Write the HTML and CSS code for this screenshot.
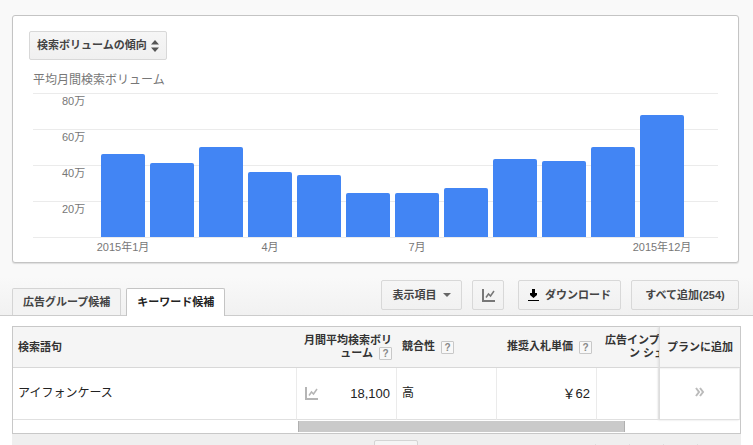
FILE: index.html
```html
<!DOCTYPE html>
<html lang="ja">
<head>
<meta charset="utf-8">
<title>キーワード候補</title>
<link rel="stylesheet" href="styles.css">
</head>
<body>
<header class="top">
  <section class="card">
    <div class="picker">
      <select class="picker-select" aria-label="グラフの種類">
        <option>検索ボリュームの傾向</option>
      </select>
      <svg class="picker-arrows" width="8" height="12" viewBox="0 0 8 12" aria-hidden="true"><path d="M4 0l4 4.500H0zM0 7.500h8L4 12z" fill="#555"/></svg>
    </div>
    <h2 class="chart-title">平均月間検索ボリューム</h2>
    <div class="chart">
      <div class="grid">
        <div class="band">80万</div>
        <div class="band">60万</div>
        <div class="band">40万</div>
        <div class="band">20万</div>
      </div>
      <div class="bars">
        <div class="bar" style="--v:461"></div>
        <div class="bar" style="--v:411"></div>
        <div class="bar" style="--v:500"></div>
        <div class="bar" style="--v:361"></div>
        <div class="bar" style="--v:344"></div>
        <div class="bar" style="--v:244"></div>
        <div class="bar" style="--v:244"></div>
        <div class="bar" style="--v:272"></div>
        <div class="bar" style="--v:433"></div>
        <div class="bar" style="--v:422"></div>
        <div class="bar" style="--v:500"></div>
        <div class="bar" style="--v:678"></div>
      </div>
    </div>
    <div class="months">
      <span>2015年1月</span><span></span><span></span>
      <span>4月</span><span></span><span></span>
      <span>7月</span><span></span><span></span>
      <span></span><span></span><span>2015年12月</span>
    </div>
  </section>

  <div class="toolbar">
    <nav class="tabs">
      <a class="tab" href="#groups">広告グループ候補</a>
      <a class="tab tab-active" href="#keywords">キーワード候補</a>
    </nav>
    <div class="actions">
      <button class="btn btn-columns" type="button">表示項目
        <svg width="8" height="4" viewBox="0 0 8 4" aria-hidden="true"><path d="M0 0h8L4 4z" fill="#666"/></svg>
      </button>
      <button class="btn btn-chart" type="button" aria-label="グラフ">
        <svg width="13" height="13" viewBox="0 0 13 13" aria-hidden="true"><path d="M1 0v12h12" fill="none" stroke="#777" stroke-width="2"/><path d="M4 8.500L6.500 5l2 2L12 2" fill="none" stroke="#777" stroke-width="1.500"/></svg>
      </button>
      <button class="btn btn-download" type="button">
        <svg width="11" height="12" viewBox="0 0 11 12" aria-hidden="true"><path d="M4 0h3v4h2v2L5.500 9 2 6V4h2zM0 11h11v1H0z" fill="#000"/></svg>
        ダウンロード
      </button>
      <button class="btn btn-all" type="button">すべて追加(254)</button>
    </div>
  </div>
</header>

<main class="results">
  <div class="table-box">
    <table class="table">
      <colgroup>
        <col><col class="col"><col class="col"><col class="col"><col class="col-cut"><col class="col-pin">
      </colgroup>
      <thead>
        <tr>
          <th scope="col">検索語句</th>
          <th scope="col" class="num">月間平均検索ボリ<br>ューム <button class="help" type="button">?</button></th>
          <th scope="col">競合性 <button class="help" type="button">?</button></th>
          <th scope="col" class="num">推奨入札単価 <button class="help" type="button">?</button></th>
          <th scope="col" class="cut"><div class="cut-label">広告インプレ<br><span class="cut-second">ン シェ</span></div></th>
          <th scope="col" class="pin">プランに追加</th>
        </tr>
      </thead>
      <tbody>
        <tr>
          <td>アイフォンケース</td>
          <td>
            <div class="volume">
              <svg width="13" height="13" viewBox="0 0 13 13" aria-hidden="true"><path d="M1 0v12h12" fill="none" stroke="#b5b5b5" stroke-width="2"/><path d="M4 8.500L6.500 5l2 2L12 2" fill="none" stroke="#b5b5b5" stroke-width="1.500"/></svg>
              <span class="figure">18,100</span>
            </div>
          </td>
          <td>高</td>
          <td class="num"><span class="figure">￥62</span></td>
          <td></td>
          <td class="pin"><button class="add" type="button" aria-label="プランに追加"><svg width="10" height="10" viewBox="0 0 10 10" aria-hidden="true"><path d="M1 1l3 4-3 4M5 1l3 4-3 4" fill="none" stroke="#bbb" stroke-width="2"/></svg></button></td>
        </tr>
      </tbody>
    </table>
    <div class="scroll"><div class="thumb"></div></div>
  </div>
  <footer class="pager">
    <button class="pager-btn" type="button" aria-label="表示行数"></button>
    <div class="pager-steps"><i></i><i></i><i></i><i></i></div>
  </footer>
</main>
</body>
</html>
```
FILE: styles.css
```css
* {
  box-sizing: border-box;
}

body {
  display: flex;
  flex-direction: column;
  height: 100vh;
  margin: 0;
  overflow: hidden;
  background: #fff;
  color: #222;
  font-family: "Liberation Sans", "Noto Sans CJK JP", sans-serif;
  font-size: 11px;
  line-height: 13px;
}

button,
select {
  margin: 0;
  font: inherit;
  color: inherit;
}

.top {
  padding: 15px 14px 0 12px;
  border-bottom: 1px solid #ccc;
  background: linear-gradient(#f9f9f9 0, #f9f9f9 88%, #f1f1f1 100%);
}

.card {
  height: 248px;
  padding: 15px 20px 0;
  border: 1px solid #c4c4c4;
  border-radius: 3px;
  background: #fff;
  box-shadow: 0 1px 1px #ddd;
}

.picker {
  position: relative;
  width: 138px;
  margin-left: -4px;
}

.picker-select {
  display: block;
  width: 100%;
  height: 29px;
  padding: 0 16px 0 7px;
  border: 1px solid #d8d8d8;
  border-radius: 2px;
  background: linear-gradient(#f6f6f6, #f0f0f0);
  color: #444;
  font-weight: bold;
  appearance: none;
}

.picker-arrows {
  position: absolute;
  top: 9px;
  right: 8px;
  pointer-events: none;
}

.chart-title {
  margin: 12px 0 5px;
  color: #777;
  font-size: 12px;
  font-weight: normal;
  line-height: 16px;
}

.chart {
  display: grid;
  height: 145px;
  border-bottom: 1px solid #ebebeb;
}

.grid,
.bars {
  grid-area: 1 / 1;
}

.grid {
  display: grid;
  grid-template-rows: repeat(4, 1fr);
}

.band {
  padding: 1px 0 0 29px;
  border-top: 1px solid #ebebeb;
  color: #777;
}

.bars,
.months {
  display: grid;
  grid-template-columns: repeat(12, minmax(0, 1fr));
  gap: 5px;
  padding: 0 34px 0 68px;
}

.bars {
  align-items: end;
}

.bar {
  height: calc(var(--v) / 800 * 100%);
  border-radius: 2px 2px 0 0;
  background: #4285f4;
}

.months {
  margin-top: 3px;
  color: #777;
}

.months span {
  display: flex;
  justify-content: center;
  white-space: nowrap;
}

.toolbar {
  display: flex;
  justify-content: space-between;
  align-items: flex-end;
  margin-top: 17px;
}

.tabs {
  display: flex;
  gap: 5px;
}

.tab {
  height: 27px;
  padding: 7px 10px 0;
  border: 1px solid #d4d4d4;
  border-bottom: 0;
  border-radius: 2px 2px 0 0;
  background: #f3f3f3;
  color: #444;
  font-weight: bold;
  text-decoration: none;
}

.tab-active {
  height: 28px;
  margin-bottom: -1px;
  border-color: #c4c4c4;
  background: #fff;
  color: #222;
}

.actions {
  display: flex;
  padding-bottom: 5px;
}

.btn {
  display: flex;
  align-items: center;
  justify-content: center;
  gap: 6px;
  height: 30px;
  padding: 0;
  border: 1px solid #d8d8d8;
  border-radius: 2px;
  background: linear-gradient(#f6f6f6, #f1f1f1);
  color: #444;
  font-weight: bold;
  white-space: nowrap;
}

.btn-columns {
  width: 81px;
}

.btn-chart {
  width: 32px;
  margin-left: 10px;
}

.btn-download {
  width: 103px;
  margin-left: 14px;
}

.btn-all {
  width: 108px;
  margin-left: 10px;
}

.results {
  display: flex;
  flex: 1;
  flex-direction: column;
  min-height: 0;
  padding: 10px 12px 0;
}

.table-box {
  border: 1px solid #c8c8c8;
}

.table {
  width: 100%;
  table-layout: fixed;
  border-collapse: separate;
  border-spacing: 0;
}

.col {
  width: 100px;
}

.col-cut {
  width: 62px;
}

.col-pin {
  width: 81px;
}

.table th {
  height: 41px;
  padding: 0 5px;
  border-bottom: 1px solid #d8d8d8;
  background: #f5f5f5;
  color: #333;
  text-align: left;
  white-space: nowrap;
}

.table td {
  height: 52px;
  padding: 0 6px 0 5px;
  border-right: 1px solid #ebebeb;
  border-bottom: 1px solid #e0e0e0;
  font-size: 12px;
}

.table .num {
  text-align: right;
}

.table .cut {
  padding: 0 0 0 8px;
}

.cut-label {
  overflow: hidden;
}

.cut-second {
  padding-left: 24px;
}

.table .pin {
  padding: 0;
  border-left: 1px solid #ddd;
  box-shadow: -1px 0 2px #ddd;
  text-align: center;
}

.volume {
  display: flex;
  align-items: center;
  justify-content: space-between;
  padding-left: 3px;
}

.figure {
  font-size: 13px;
}

.help {
  width: 13px;
  height: 13px;
  margin-left: 3px;
  padding: 0;
  border: 1px solid #c8c8c8;
  border-radius: 1px;
  background: #f8f8f8;
  color: #888;
  font-size: 10px;
  line-height: 11px;
  vertical-align: middle;
}

.add {
  padding: 0;
  border: 0;
  background: none;
}

.scroll {
  display: flex;
  height: 13px;
  padding: 1px 115px 0 285px;
}

.thumb {
  flex: 1;
  height: 11px;
  border: solid #b0b0b0;
  border-width: 0 1px;
  background: #cacaca;
}

.pager {
  display: flex;
  flex: 1;
  justify-content: space-between;
  min-height: 0;
  padding: 6px 10px 0 362px;
  overflow: hidden;
  background: #efefef;
}

.pager-btn {
  width: 44px;
  height: 26px;
  border: 1px solid #d4d4d4;
  border-radius: 2px;
  background: #f5f5f5;
}

.pager-steps {
  display: flex;
  padding-top: 4px;
}

.pager-steps i {
  width: 34px;
  height: 22px;
  border-left: 1px solid #ddd;
}
```
